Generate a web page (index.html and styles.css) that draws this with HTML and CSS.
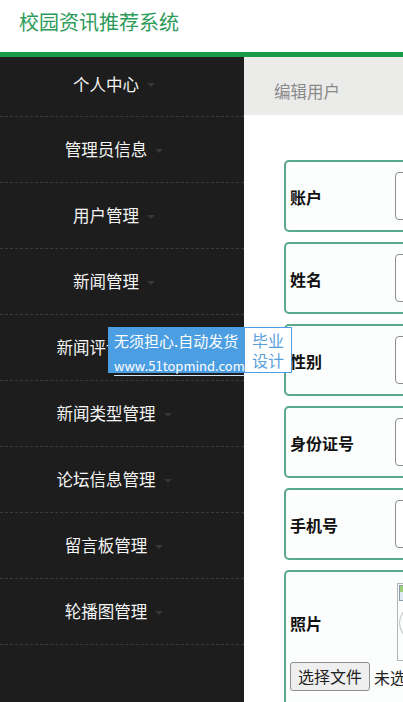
FILE: index.html
```html
<!DOCTYPE html>
<html lang="zh">
<head>
<meta charset="utf-8">
<title>校园资讯推荐系统</title>
<link rel="stylesheet" href="styles.css">
</head>
<body>
<header class="top">
  <h1 class="brand">校园资讯推荐系统</h1>
</header>
<div class="layout">
  <nav class="side">
    <ul class="menu">
      <li class="menu-item first"><span>个人中心</span><i class="caret"></i></li>
      <li class="menu-item"><span>管理员信息</span><i class="caret"></i></li>
      <li class="menu-item"><span>用户管理</span><i class="caret"></i></li>
      <li class="menu-item"><span>新闻管理</span><i class="caret"></i></li>
      <li class="menu-item"><span>新闻评论管理</span><i class="caret"></i></li>
      <li class="menu-item"><span>新闻类型管理</span><i class="caret"></i></li>
      <li class="menu-item"><span>论坛信息管理</span><i class="caret"></i></li>
      <li class="menu-item"><span>留言板管理</span><i class="caret"></i></li>
      <li class="menu-item"><span>轮播图管理</span><i class="caret"></i></li>
    </ul>
  </nav>
  <main class="main">
    <div class="crumb">编辑用户</div>
    <form class="form">
      <div class="row"><label class="label">账户</label><input class="field" type="text"></div>
      <div class="row"><label class="label">姓名</label><input class="field" type="text"></div>
      <div class="row"><label class="label">性别</label><input class="field" type="text"></div>
      <div class="row"><label class="label">身份证号</label><input class="field" type="text"></div>
      <div class="row"><label class="label">手机号</label><input class="field" type="text"></div>
      <div class="row photo">
        <div class="photo-top">
          <label class="label">照片</label>
          <div class="pic"><div class="pic-icon"></div><div class="pic-ring"></div></div>
        </div>
        <div class="file">
          <span class="file-btn">选择文件</span><span class="file-text">未选择任何文件</span>
        </div>
      </div>
    </form>
  </main>
</div>
<div class="promo">
  <div class="promo-left">
    <div class="promo-line">无须担心.自动发货</div>
    <div class="promo-url">www.51topmind.com</div>
  </div>
  <div class="promo-right">毕业<br>设计</div>
</div>
</body>
</html>
```

FILE: styles.css
```css
* { box-sizing: border-box; }
html, body {
  margin: 0;
  padding: 0;
  height: 100%;
  overflow: hidden;
  background: #ffffff;
  font-family: "Noto Sans CJK SC", "Noto Sans", sans-serif;
}
.top {
  height: 57px;
  background: #ffffff;
  border-bottom: 5px solid #1c9a4c;
}
.brand {
  margin: 0;
  padding: 7px 0 0 19px;
  font-size: 20px;
  font-weight: normal;
  line-height: 30px;
  color: #2c9a58;
}
.layout {
  display: flex;
  height: 645px;
}
.side {
  width: 244px;
  flex: none;
  background: #1c1d1c;
}
.menu {
  list-style: none;
  margin: 0;
  padding: 0;
}
.menu-item {
  height: 66px;
  line-height: 65px;
  border-bottom: 1px dashed #3a3b3a;
  display: flex;
  justify-content: center;
  align-items: center;
  padding-right: 16px;
  color: #f4f4f4;
  font-size: 16.5px;
}
.menu-item.first {
  height: 60px;
  padding-bottom: 5px;
}
.caret {
  display: inline-block;
  width: 0;
  height: 0;
  margin-left: 8px;
  margin-top: 2px;
  border-left: 4px solid transparent;
  border-right: 4px solid transparent;
  border-top: 4px solid #363736;
}
.main {
  flex: 1;
  overflow: hidden;
  background: #ffffff;
}
.crumb {
  height: 58px;
  background: #ebebea;
  padding: 10px 0 0 30px;
  line-height: 48px;
  font-size: 16.5px;
  color: #8a8a8a;
  white-space: nowrap;
}
.form {
  padding: 45px 0 0 40px;
  width: 560px;
}
.row {
  display: flex;
  align-items: center;
  height: 72px;
  margin-bottom: 10px;
  padding: 0 4px;
  border: 2px solid #5aa98b;
  border-radius: 5px;
  background: #fbfefc;
}
.label {
  width: 105px;
  flex: none;
  font-size: 16px;
  font-weight: bold;
  color: #111111;
  padding-top: 1px;
}
.field {
  width: 300px;
  height: 48px;
  border: 1px solid #8a8f8c;
  border-radius: 4px;
  background: #ffffff;
}
.row.photo {
  height: 150px;
  flex-direction: column;
  align-items: stretch;
  padding-top: 11px;
}
.photo-top {
  display: flex;
  align-items: center;
  height: 78px;
}
.pic {
  position: relative;
  width: 120px;
  height: 78px;
  margin-left: 2px;
  border: 1px solid #b5b5b5;
  overflow: hidden;
}
.pic-icon {
  position: absolute;
  left: 1px;
  top: 1px;
  width: 14px;
  height: 16px;
  background: linear-gradient(#9ccf7a 0 45%, #dfeaf2 45%);
  border: 1px solid #8c9aa5;
}
.pic-ring {
  position: absolute;
  left: 1px;
  top: 8px;
  width: 110px;
  height: 62px;
  border: 1px solid #c8c8c8;
  border-radius: 50%;
}
.file {
  display: flex;
  align-items: center;
  margin-top: 1px;
  white-space: nowrap;
}
.file-btn {
  display: inline-block;
  height: 29px;
  line-height: 27px;
  padding: 0 7px;
  font-size: 16px;
  color: #222222;
  background: #efefef;
  border: 1px solid #8f8f8f;
  border-radius: 3px;
}
.file-text {
  margin-left: 4px;
  font-size: 16px;
  color: #222222;
}
.promo {
  position: absolute;
  left: 108px;
  top: 327px;
  width: 184px;
  height: 46px;
  display: flex;
  background: #4b9ee2;
  padding: 1px 1px 1px 0;
}
.promo-left {
  flex: 1;
  padding: 2px 0 0 6px;
  color: #ffffff;
  white-space: nowrap;
}
.promo-line {
  font-size: 15px;
  line-height: 22px;
}
.promo-url {
  font-size: 13px;
  line-height: 18px;
  border-bottom: 1px solid #cfe4f7;
  display: inline-block;
}
.promo-right {
  width: 46px;
  background: #ffffff;
  color: #5aa0da;
  font-size: 16px;
  line-height: 20px;
  text-align: center;
  padding-top: 2px;
}
```
